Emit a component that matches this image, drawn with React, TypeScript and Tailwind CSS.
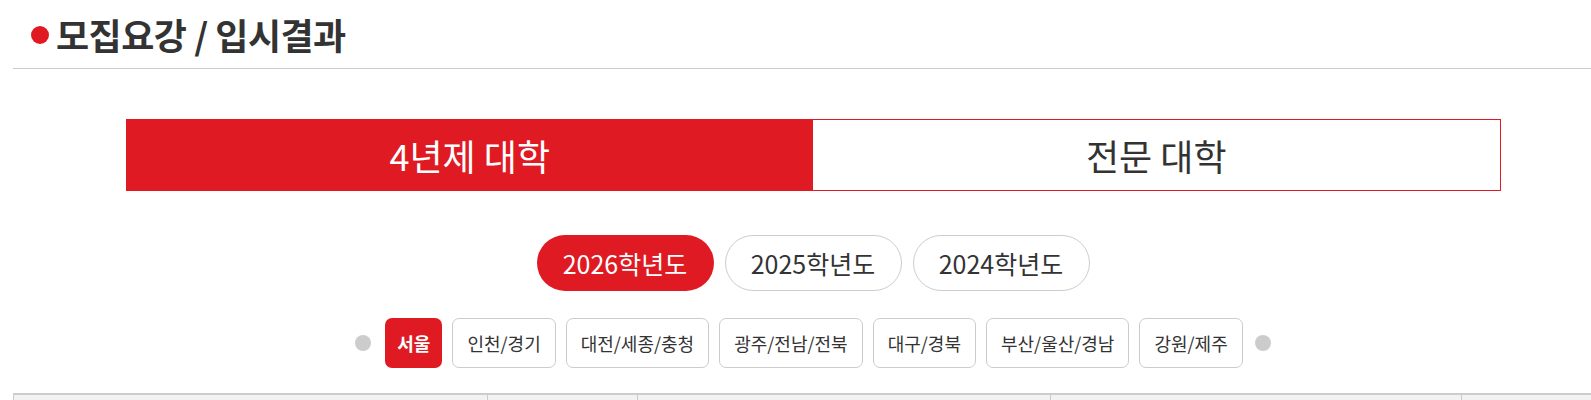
import React, { useState } from 'react';

const FONT = { fontFamily: '"Noto Sans CJK KR", "Noto Sans", sans-serif' };

const years = ['2026학년도', '2025학년도', '2024학년도'];
const regions = ['서울', '인천/경기', '대전/세종/충청', '광주/전남/전북', '대구/경북', '부산/울산/경남', '강원/제주'];

export default function App() {
  const [tab, setTab] = useState(0);
  const [year, setYear] = useState(0);
  const [region, setRegion] = useState(0);

  return (
    <div className="w-full min-h-[400px] bg-white overflow-hidden text-[#333]" style={FONT}>
      <div className="ml-[13px] w-[1600px]">
        {/* Title */}
        <div className="h-[69px] border-b border-[#cccccc] flex items-center pl-[18px] gap-[7px]">
          <span className="w-[18px] h-[18px] rounded-full bg-[#e01a22] mt-[1px]" />
          <h1 className="text-[36px] font-bold tracking-[-0.5px] leading-none text-[#333]">모집요강 / 입시결과</h1>
        </div>

        {/* University type tabs */}
        <div className="mt-[50px] mx-auto w-[1375px] h-[72px] border border-[#e01a22] flex">
          {['4년제 대학', '전문 대학'].map((t, i) => (
            <button
              key={t}
              onClick={() => setTab(i)}
              className={`flex-1 flex items-center justify-center text-[36px] leading-none ${
                tab === i ? 'bg-[#e01a22] text-white' : 'bg-white text-[#333]'
              }`}
            >
              {t}
            </button>
          ))}
        </div>

        {/* Year pills */}
        <div className="mt-[44px] flex justify-center gap-[11px]">
          {years.map((y, i) => (
            <button
              key={y}
              onClick={() => setYear(i)}
              className={`w-[177px] h-[56px] rounded-full flex items-center justify-center text-[25px] leading-none ${
                year === i ? 'bg-[#e01a22] text-white' : 'bg-white text-[#333] border border-[#cccccc]'
              }`}
            >
              {y}
            </button>
          ))}
        </div>

        {/* Region buttons */}
        <div className="mt-[27px] flex justify-center items-center gap-[10px]">
          <span className="w-[16px] h-[16px] rounded-full bg-[#cccccc] mr-[4px]" />
          {regions.map((r, i) => (
            <button
              key={r}
              onClick={() => setRegion(i)}
              className={`h-[50px] rounded-[7px] flex items-center justify-center text-[18px] leading-none ${
                region === i ? 'bg-[#e01a22] text-white font-bold px-[12px]' : 'px-[14px] bg-white text-[#333] border border-[#cccccc]'
              }`}
            >
              {r}
            </button>
          ))}
          <span className="w-[16px] h-[16px] rounded-full bg-[#cccccc] ml-[2px]" />
        </div>

        {/* Table header (cut off) */}
        <div className="mt-[25px] border-t-2 border-l border-[#cccccc] bg-[#f2f2f2] h-[40px] grid grid-cols-[474px_150px_413px_411px_1fr]">
          <div className="border-r border-[#cccccc]" />
          <div className="border-r border-[#cccccc]" />
          <div className="border-r border-[#cccccc]" />
          <div className="border-r border-[#cccccc]" />
          <div />
        </div>
      </div>
    </div>
  );
}
